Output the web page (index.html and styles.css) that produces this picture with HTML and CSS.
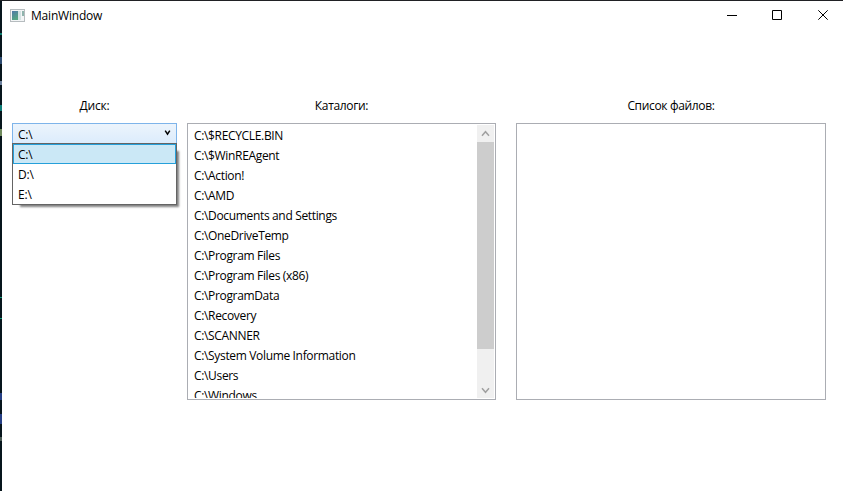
FILE: index.html
```
<!DOCTYPE html>
<html lang="ru">
<head>
<meta charset="utf-8">
<title>MainWindow</title>
<link rel="stylesheet" href="styles.css">
</head>
<body>
<div class="window">
  <header class="titlebar">
    <svg class="app-icon" width="15" height="13" viewBox="0 0 15 13" shape-rendering="crispEdges">
      <defs><linearGradient id="pane" x1="0" y1="0" x2="0.4" y2="1"><stop offset="0" stop-color="#5079a8"/><stop offset="1" stop-color="#55a583"/></linearGradient></defs>
      <rect x=".5" y=".5" width="14" height="12" fill="#f3f5f6" stroke="#b6bcbf"/>
      <rect x="2" y="2" width="6" height="9" fill="url(#pane)"/>
      <rect x="8" y="2" width="3" height="9" fill="#d3e3e3"/>
      <rect x="12" y="2" width="2" height="5" fill="#8fb4ad"/>
    </svg>
    <h1 class="title">MainWindow</h1>
    <div class="controls">
      <svg width="45" height="29" viewBox="0 0 45 29"><path d="M17 14.5h10"/></svg>
      <svg width="45" height="29" viewBox="0 0 45 29"><path d="M17.5 9.5h9v9h-9z"/></svg>
      <svg width="45" height="29" viewBox="0 0 45 29"><path d="M18.3 9.3l9.4 9.4M27.7 9.3l-9.4 9.4"/></svg>
    </div>
  </header>
  <main class="columns">
    <section class="column drives">
      <h2 class="label">Диск:</h2>
      <div class="combo">
        <span>C:\</span>
        <svg width="7" height="6" viewBox="0 0 7 6"><path d="M1.2 .7l2.3 3.4L5.8 .7"/></svg>
        <ul class="popup">
          <li class="selected">C:\</li>
          <li>D:\</li>
          <li>E:\</li>
        </ul>
      </div>
    </section>
    <section class="column folders">
      <h2 class="label">Каталоги:</h2>
      <div class="listbox">
        <ul class="items">
          <li>C:\$RECYCLE.BIN</li>
          <li>C:\$WinREAgent</li>
          <li>C:\Action!</li>
          <li>C:\AMD</li>
          <li>C:\Documents and Settings</li>
          <li>C:\OneDriveTemp</li>
          <li>C:\Program Files</li>
          <li>C:\Program Files (x86)</li>
          <li>C:\ProgramData</li>
          <li>C:\Recovery</li>
          <li>C:\SCANNER</li>
          <li>C:\System Volume Information</li>
          <li>C:\Users</li>
          <li>C:\Windows</li>
        </ul>
        <div class="scrollbar">
          <svg width="17" height="17" viewBox="0 0 17 17"><path d="M5 10.7l3.5-4 3.5 4"/></svg>
          <div class="thumb"></div>
          <svg class="down" width="17" height="17" viewBox="0 0 17 17"><path d="M5 7.3l3.5 4 3.5-4"/></svg>
        </div>
      </div>
    </section>
    <section class="column files">
      <h2 class="label">Список файлов:</h2>
      <div class="listbox"></div>
    </section>
  </main>
</div>
</body>
</html>
```
FILE: styles.css
```
* { box-sizing: border-box; }
body {
  margin: 0;
  height: 491px;
  overflow: hidden;
  padding: 1px 0 0 2px;
  background:
    linear-gradient(#202124, #202124) 0 0 / 100% 1px no-repeat,
    linear-gradient(#07151c 33px, #0a7a6c 33px 35px, #07151c 35px 57px, #2c4a70 57px 64px, #07151c 64px 81px, #6b7f9c 81px 85px, #07151c 85px 105px, #0d7d78 105px 111px, #07151c 111px 129px, #6f8a5c 129px 136px, #07151c 136px 297px, #0d9a78 297px 298px, #07151c 298px 318px, #0d9a78 318px 319px, #07151c 319px 393px, #263f85 393px 400px, #07151c 400px 414px, #263f85 414px 424px, #07151c 424px 437px, #4a5a54 437px 441px, #07151c 441px);
  color: #000;
  font: 12px/20px "Open Sans", "Noto Sans", sans-serif;
  letter-spacing: -0.34px;
}
h1, h2, ul { margin: 0; padding: 0; font: inherit; list-style: none; }
svg { display: block; flex: none; fill: none; }
.window { height: 490px; background: #fff; }
.titlebar { display: flex; align-items: center; height: 29px; padding-left: 8px; }
.title { margin-left: 6px; padding-top: 1px; letter-spacing: -0.2px; }
.controls { display: flex; margin-left: auto; margin-right: -2px; }
.controls svg { stroke: #000; }
.columns { display: flex; padding: 66px 0 0 10px; }
.column { flex: none; }
.drives { width: 165px; margin-right: 10px; }
.folders { width: 309px; margin-right: 20px; }
.files { width: 310px; }
.label { height: 27px; text-align: center; }
.drives .label { letter-spacing: -0.22px; }
.combo {
  position: relative;
  display: flex;
  justify-content: space-between;
  height: 21px;
  padding: 1px 5px 0;
  border: 1px solid #7eb4ea;
  background: linear-gradient(#ecf4fc, #dcecfc);
  letter-spacing: -0.22px;
}
.combo > svg { margin-top: 5px; stroke: #000; stroke-width: 1.5; }
.popup {
  position: absolute;
  left: -1px;
  top: 19px;
  width: 165px;
  height: 62px;
  border: 1px solid #646464;
  background: #fff;
  box-shadow: 5px 5px 2px -3px rgba(0, 0, 0, .5);
}
.popup li { height: 20px; padding-left: 5px; line-height: 22px; }
.popup .selected { padding-left: 4px; border: 1px solid #26a0da; background: #cbe8f6; line-height: 20px; }
.listbox {
  display: flex;
  height: 277px;
  padding: 1px;
  border: 1px solid #abadb3;
}
.items { flex: 1; height: 273px; overflow: hidden; padding: 1px 0 0 5px; }
.items li { height: 20px; white-space: nowrap; }
.scrollbar { width: 17px; height: 273px; display: flex; flex-direction: column; background: #f0f0f0; }
.scrollbar svg { stroke: #a0a0a0; stroke-width: 1.5; }
.thumb { height: 207px; background: #cdcdcd; }
.down { margin-top: auto; }
```
